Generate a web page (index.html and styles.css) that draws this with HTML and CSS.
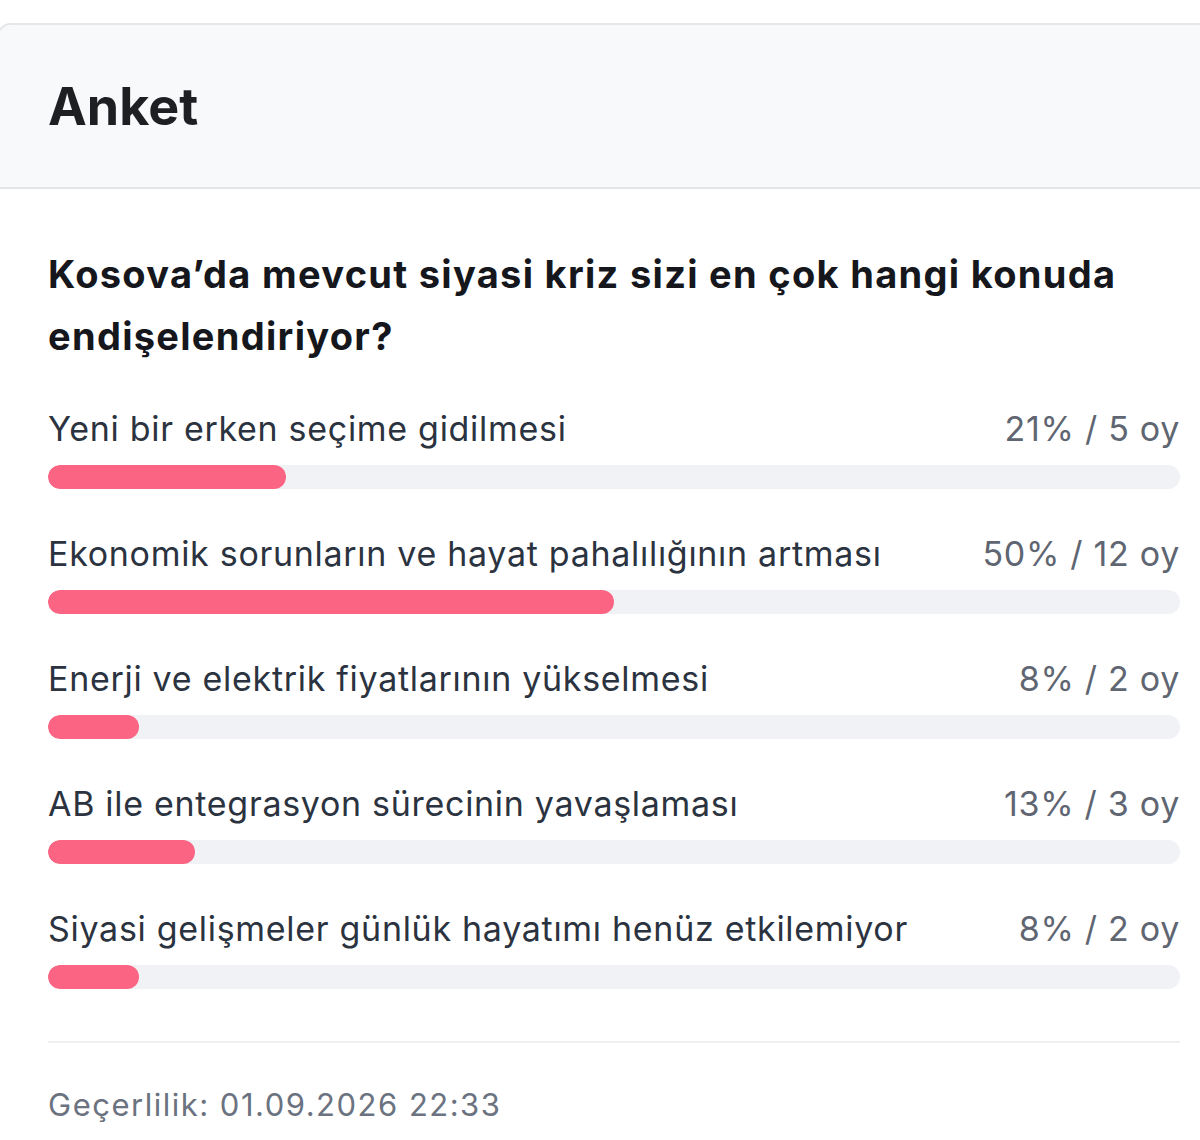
FILE: index.html
```html
<!DOCTYPE html>
<html lang="tr">
<head>
    <meta charset="UTF-8">
    <meta name="viewport" content="width=device-width, initial-scale=1.0">
    <title>Anket</title>
    <link rel="stylesheet" href="styles.css">
</head>
<body>
    <div class="poll-card">
        <div class="poll-header">
            <h2>Anket</h2>
        </div>

        <div class="poll-body">
            <h3 class="poll-question">Kosova’da mevcut siyasi kriz sizi en çok hangi konuda endişelendiriyor?</h3>

            <div class="poll-option">
                <div class="option-row">
                    <span class="option-label">Yeni bir erken seçime gidilmesi</span>
                    <span class="option-result">21% / 5 oy</span>
                </div>
                <div class="option-track"><div class="option-fill" style="width: 21%"></div></div>
            </div>

            <div class="poll-option">
                <div class="option-row">
                    <span class="option-label">Ekonomik sorunların ve hayat pahalılığının artması</span>
                    <span class="option-result">50% / 12 oy</span>
                </div>
                <div class="option-track"><div class="option-fill" style="width: 50%"></div></div>
            </div>

            <div class="poll-option">
                <div class="option-row">
                    <span class="option-label">Enerji ve elektrik fiyatlarının yükselmesi</span>
                    <span class="option-result">8% / 2 oy</span>
                </div>
                <div class="option-track"><div class="option-fill" style="width: 8%"></div></div>
            </div>

            <div class="poll-option">
                <div class="option-row">
                    <span class="option-label">AB ile entegrasyon sürecinin yavaşlaması</span>
                    <span class="option-result">13% / 3 oy</span>
                </div>
                <div class="option-track"><div class="option-fill" style="width: 13%"></div></div>
            </div>

            <div class="poll-option">
                <div class="option-row">
                    <span class="option-label">Siyasi gelişmeler günlük hayatımı henüz etkilemiyor</span>
                    <span class="option-result">8% / 2 oy</span>
                </div>
                <div class="option-track"><div class="option-fill" style="width: 8%"></div></div>
            </div>

            <div class="poll-footer">Geçerlilik: 01.09.2026 22:33</div>
        </div>
    </div>
</body>
</html>
```

FILE: styles.css
```css
body {
    margin: 0;
    padding-top: 23px;
    font-family: Inter, 'Noto Sans', sans-serif;
    background-color: #fff;
    overflow: hidden;
}

.poll-card {
    width: 1230px;
    border: 2px solid #e4e6ea;
    border-radius: 14px;
    margin-left: -3px;
    background: #fff;
    overflow: hidden;
}

.poll-header {
    background-color: #f8f9fb;
    border-bottom: 2px solid #e4e6ea;
    height: 162px;
    padding: 0 49px;
    display: flex;
    align-items: center;
}

.poll-header h2 {
    margin: 0;
    font-size: 52px;
    font-weight: 700;
    color: #1e1f22;
}

.poll-body {
    padding: 54px 49px 60px;
}

.poll-question {
    margin: 0 0 40px;
    font-size: 38px;
    line-height: 62px;
    font-weight: 700;
    letter-spacing: 1.3px;
    color: #15171c;
}

.poll-option {
    margin-bottom: 43px;
}

.option-row {
    display: flex;
    justify-content: space-between;
    align-items: baseline;
    font-size: 34px;
    line-height: 44px;
    letter-spacing: 0.7px;
}

.option-label {
    color: #2b3340;
}

.option-result {
    color: #5f6672;
}

.option-track {
    margin-top: 14px;
    height: 24px;
    border-radius: 12px;
    background-color: #f0f2f5;
    overflow: hidden;
}

.option-fill {
    height: 100%;
    border-radius: 12px;
    background-color: #fb6583;
}

.poll-footer {
    border-top: 2px solid #eef0f2;
    margin-top: 52px;
    padding-top: 43px;
    font-size: 31px;
    letter-spacing: 1.5px;
    color: #6b7280;
}
```
